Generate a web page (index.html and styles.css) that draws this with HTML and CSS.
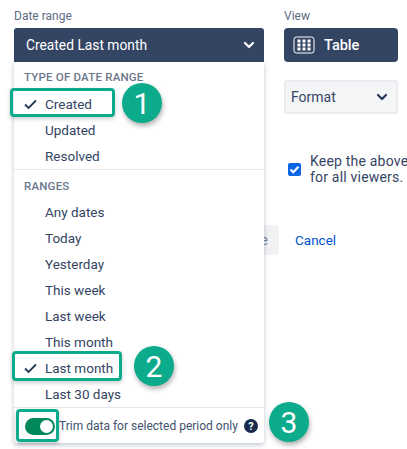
FILE: index.html
```html
<!DOCTYPE html>
<html lang="en">
<head>
<meta charset="utf-8">
<title>Date range</title>
<link rel="stylesheet" href="styles.css">
</head>
<body>
<main class="page">
  <div class="top">
    <section class="col-date">
      <div class="label">Date range</div>
      <button class="btn-dark date-btn"><span>Created Last month</span>
        <svg class="chev" width="12" height="8" viewBox="0 0 12 8"><path d="M2 2l4 4 4-4" fill="none" stroke="#fff" stroke-width="2.2" stroke-linecap="round" stroke-linejoin="round"/></svg>
      </button>
      <div class="menu">
        <div class="group-title">TYPE OF DATE RANGE</div>
        <div class="item checked"><svg class="tick" width="16" height="12" viewBox="0 0 16 12"><path d="M2 6.5l3.5 3.5L13 2.5" fill="none" stroke="#253858" stroke-width="1.8"/></svg>Created</div>
        <div class="item">Updated</div>
        <div class="item">Resolved</div>
        <div class="divider"></div>
        <div class="group-title">RANGES</div>
        <div class="item">Any dates</div>
        <div class="item">Today</div>
        <div class="item">Yesterday</div>
        <div class="item">This week</div>
        <div class="item">Last week</div>
        <div class="item">This month</div>
        <div class="item checked"><svg class="tick" width="16" height="12" viewBox="0 0 16 12"><path d="M2 6.5l3.5 3.5L13 2.5" fill="none" stroke="#253858" stroke-width="1.8"/></svg>Last month</div>
        <div class="item">Last 30 days</div>
        <div class="divider"></div>
        <div class="trim">
          <span class="toggle"><span class="knob"></span></span>
          <span class="trim-text">Trim data for selected period only</span>
          <span class="help">?</span>
        </div>
      </div>
    </section>
    <section class="col-view">
      <div class="label">View</div>
      <button class="btn-dark view-btn">
        <svg width="22" height="18" viewBox="0 0 22 18"><rect x="1" y="1" width="20" height="16" rx="2.5" fill="none" stroke="#fff" stroke-width="1"/><g fill="#fff"><rect x="4.5" y="3.5" width="3" height="3"/><rect x="9.5" y="3.5" width="3" height="3"/><rect x="14.5" y="3.5" width="3" height="3"/><rect x="4.5" y="7.5" width="3" height="3"/><rect x="9.5" y="7.5" width="3" height="3"/><rect x="14.5" y="7.5" width="3" height="3"/><rect x="4.5" y="11.5" width="3" height="3"/><rect x="9.5" y="11.5" width="3" height="3"/><rect x="14.5" y="11.5" width="3" height="3"/></g></svg>
        <span>Table</span>
      </button>
      <div class="format"><span>Format</span>
        <svg width="12" height="8" viewBox="0 0 12 8"><path d="M2 2l4 4 4-4" fill="none" stroke="#253858" stroke-width="2.2" stroke-linecap="round" stroke-linejoin="round"/></svg>
      </div>
      <div class="keep">
        <span class="check"><svg width="11" height="9" viewBox="0 0 11 9"><path d="M1.5 4.5l2.8 2.8L9.5 1.8" fill="none" stroke="#fff" stroke-width="2"/></svg></span>
        <span class="keep-text">Keep the above<br>for all viewers.</span>
      </div>
    </section>
  </div>
  <div class="actions">
    <span class="save">e</span>
    <a class="cancel">Cancel</a>
  </div>
</main>
<div class="hl hl-1"></div>
<div class="hl hl-2"></div>
<div class="hl hl-3"></div>
<div class="num num-1">1</div>
<div class="num num-2">2</div>
<div class="num num-3">3</div>
</body>
</html>
```
FILE: styles.css
```css
* { box-sizing: border-box; }
html, body { margin: 0; height: 100%; }
body { background: #fff; font-family: Roboto, "Liberation Sans", sans-serif; color: #253858; overflow: hidden; position: relative; }
.page { padding: 8px 9px 0 14px; }
.top { display: flex; gap: 20px; }
.col-date { width: 250px; position: relative; z-index: 2; }
.col-view { width: 114px; flex: none; }
.label { font-size: 12px; line-height: 16px; color: #5e6c84; }
.btn-dark { border: 0; background: #344563; color: #fff; font-family: inherit; display: flex; align-items: center; margin-top: 4px; height: 34px; width: 100%; }
.date-btn { justify-content: space-between; padding: 0 9px 0 12px; font-size: 13.8px; border-radius: 3px 3px 0 0; }
.view-btn { gap: 9px; padding: 0 9px; font-size: 14.5px; font-weight: 500; border-radius: 4px; }
.menu { position: absolute; left: 0; top: 54px; width: 250px; height: 381px; background: #fff; box-shadow: 0 2px 5px rgba(9,30,66,.25); padding-top: 7px; border-radius: 0 0 3px 3px; }
.group-title { font-size: 11.5px; line-height: 16px; color: #6b778c; font-weight: 500; padding-left: 10px; letter-spacing: .2px; margin-bottom: 6px; }
.item { height: 26px; line-height: 26px; font-size: 13.5px; padding-left: 31px; position: relative; color: #344563; }
.tick { position: absolute; left: 9px; top: 7px; }
.divider { height: 1px; background: #e4e6ea; }
.divider + .group-title { margin-top: 8px; margin-bottom: 5px; }
.trim { display: flex; align-items: center; padding: 0 0 0 11px; margin-top: 9px; height: 18px; }
.toggle { width: 30px; height: 17px; border-radius: 9px; background: #00875a; position: relative; flex: none; margin-right: 4px; }
.knob { position: absolute; right: 2px; top: 2px; width: 13px; height: 13px; border-radius: 50%; background: #fff; }
.trim-text { font-size: 12px; color: #42526e; white-space: nowrap; }
.help { margin-left: 6px; width: 14px; height: 14px; border-radius: 50%; background: #172b4d; color: #fff; font-size: 11px; font-weight: 700; display: flex; align-items: center; justify-content: center; flex: none; }
.format { margin-top: 18px; height: 34px; background: #f4f5f7; border: 2px solid #ebecf0; border-radius: 3px; display: flex; align-items: center; justify-content: space-between; padding: 0 8px 0 5px; font-size: 14px; color: #344563; }
.keep { display: flex; align-items: center; margin-top: 39px; padding-left: 4px; white-space: nowrap; }
.check { width: 13px; height: 13px; border-radius: 2px; background: #0b66e4; display: flex; align-items: center; justify-content: center; flex: none; margin-right: 9px; }
.keep-text { font-size: 14px; line-height: 16px; letter-spacing: .2px; color: #344563; }
.actions { position: absolute; left: 245px; top: 225px; display: flex; align-items: center; }
.save { width: 34px; height: 30px; background: #f1f2f4; border-radius: 3px; display: flex; align-items: center; justify-content: flex-end; padding-right: 11px; font-size: 14px; color: #7a869a; }
.cancel { margin-left: 16px; font-size: 13.5px; color: #0052cc; }
.hl { position: absolute; z-index: 3; border: 3px solid #0bab8b; border-radius: 4px; box-shadow: 0 2px 4px rgba(0,0,0,.2); }
.hl-1 { left: 10px; top: 88px; width: 105px; height: 29px; }
.hl-2 { left: 12px; top: 351px; width: 110px; height: 30px; }
.hl-3 { left: 16px; top: 409px; width: 43px; height: 33px; }
.num { position: absolute; z-index: 3; width: 40px; height: 40px; border-radius: 50%; background: #0bab8b; color: #fff; font-size: 30px; display: flex; align-items: center; justify-content: center; box-shadow: 1px 3px 5px rgba(0,0,0,.3); }
.num-1 { left: 122px; top: 83px; }
.num-2 { left: 134px; top: 346px; }
.num-3 { left: 269px; top: 402px; }
```
